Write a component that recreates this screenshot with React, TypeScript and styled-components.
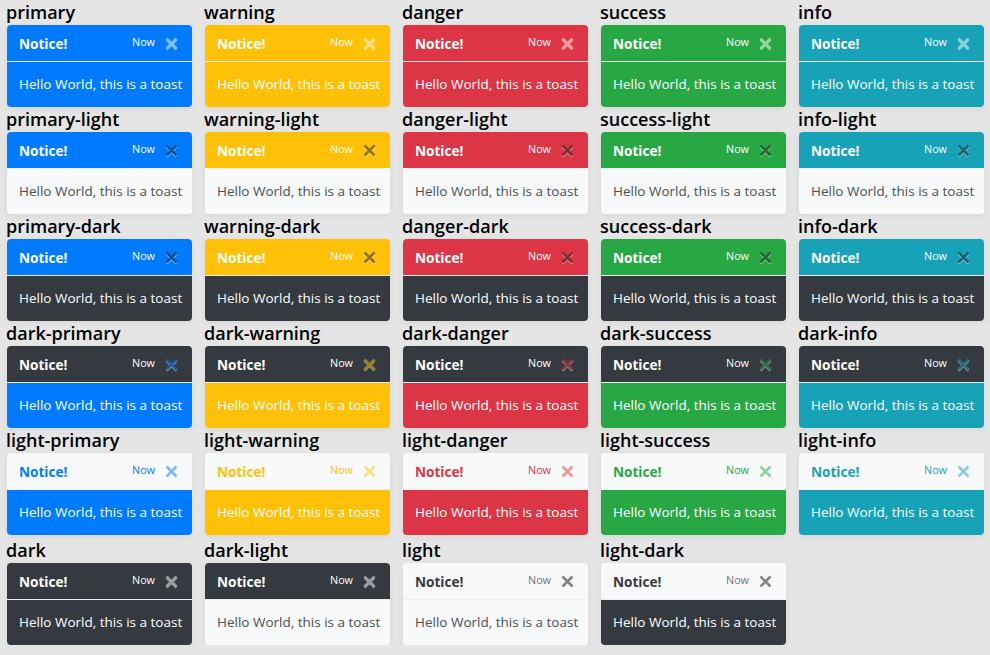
import React from "react";
import styled, { createGlobalStyle } from "styled-components";

const COLORS: Record<string, string> = {
  primary: "#007bff",
  warning: "#ffc107",
  danger: "#dc3545",
  success: "#28a745",
  info: "#17a2b8",
  dark: "#343a40",
  light: "#f8f9fa",
};

const GlobalStyle = createGlobalStyle`
  html, body { margin: 0; padding: 0; background: #e5e5e5; }
  body { font-family: "Open Sans", "Noto Sans", sans-serif; color: #000; }
`;

const Page = styled.div`
  display: grid;
  grid-template-columns: repeat(5, 185px);
  column-gap: 13px;
  row-gap: 1px;
  padding: 1px 0 0 7px;
`;

const Cell = styled.div<{ $last?: boolean }>`
  display: flex;
  flex-direction: column;
  margin-top: ${(p) => (p.$last ? "3px" : "0")};
`;

const Title = styled.h4`
  margin: 0 0 0 -1px;
  font-size: 18px;
  line-height: 22px;
  height: 24px;
  font-weight: 600;
  color: #000;
  white-space: nowrap;
`;

const ToastBox = styled.div`
  width: 185px;
  border-radius: 4px;
  overflow: hidden;
  box-shadow: 0 2px 6px rgba(0, 0, 0, 0.06);
  background: #fff;
`;

const Header = styled.div<{ $bg: string }>`
  display: flex;
  align-items: center;
  height: 37px;
  padding: 0 14px 0 12px;
  box-sizing: border-box;
  background: ${(p) => p.$bg};
  border-bottom: 1px solid #eceef0;
`;

const Strong = styled.strong<{ $color: string }>`
  flex: 1;
  font-size: 13.6px;
  font-weight: 700;
  line-height: 21px;
  color: ${(p) => p.$color};
  padding-top: 1px;
`;

const Small = styled.small<{ $color: string }>`
  font-size: 10.8px;
  line-height: 16px;
  color: ${(p) => p.$color};
  margin-bottom: 3px;
`;

const CloseBtn = styled.svg`
  margin-left: 10px;
  width: 13px;
  height: 14px;
  opacity: 0.5;
  flex: none;
  margin-top: 1px;
`;

const Body = styled.div<{ $bg: string; $color: string }>`
  padding: 12px;
  height: 45px;
  box-sizing: border-box;
  font-size: 13.5px;
  line-height: 21px;
  background: ${(p) => p.$bg};
  color: ${(p) => p.$color};
  white-space: nowrap;
`;

function styleFor(a: string, b: string) {
  const colored = (k: string) => k !== "light" && k !== "dark";
  let titleColor = "#fff";
  let nowColor = "#fff";
  if (a === "light") {
    if (colored(b)) {
      titleColor = COLORS[b];
      nowColor = COLORS[b];
    } else {
      titleColor = "#343a40";
      nowColor = "#6c757d";
    }
  }
  let closeColor = "#fff";
  if (a === b) {
    closeColor = a === "light" ? "#111" : "#fff";
  } else if (colored(a) && !colored(b)) {
    closeColor = "#212529";
  } else if ((a === "dark" || a === "light") && colored(b)) {
    closeColor = COLORS[b];
  } else if (a === "dark" && b === "light") {
    closeColor = "#fff";
  } else if (a === "light" && b === "dark") {
    closeColor = "#111";
  }
  const bodyColor = b === "light" ? "#495057" : "#fff";
  return { titleColor, nowColor, closeColor, bodyColor };
}

function CloseIcon({ color }: { color: string }) {
  return (
    <CloseBtn viewBox="0 0 13 14">
      <g transform="translate(0 1)" stroke="#fff" strokeWidth="2.6">
        <path d="M1.5 1.5 L11.5 11.5 M11.5 1.5 L1.5 11.5" />
      </g>
      <g stroke={color} strokeWidth="2.6">
        <path d="M1.5 1.5 L11.5 11.5 M11.5 1.5 L1.5 11.5" />
      </g>
    </CloseBtn>
  );
}

function Toast({ name }: { name: string }) {
  const parts = name.split("-");
  const a = parts[0];
  const b = parts[1] ?? parts[0];
  const s = styleFor(a, b);
  return (
    <ToastBox>
      <Header $bg={COLORS[a]}>
        <Strong $color={s.titleColor}>Notice!</Strong>
        <Small $color={s.nowColor}>Now</Small>
        <CloseIcon color={s.closeColor} />
      </Header>
      <Body $bg={COLORS[b]} $color={s.bodyColor}>
        Hello World, this is a toast
      </Body>
    </ToastBox>
  );
}

const ROWS: string[][] = [
  ["primary", "warning", "danger", "success", "info"],
  ["primary-light", "warning-light", "danger-light", "success-light", "info-light"],
  ["primary-dark", "warning-dark", "danger-dark", "success-dark", "info-dark"],
  ["dark-primary", "dark-warning", "dark-danger", "dark-success", "dark-info"],
  ["light-primary", "light-warning", "light-danger", "light-success", "light-info"],
  ["dark", "dark-light", "light", "light-dark"],
];

export default function App() {
  return (
    <>
      <GlobalStyle />
      <Page>
        {ROWS.map((row, ri) =>
          row.map((name) => (
            <Cell key={name} $last={ri === ROWS.length - 1}>
              <Title>{name}</Title>
              <Toast name={name} />
            </Cell>
          ))
        )}
      </Page>
    </>
  );
}
